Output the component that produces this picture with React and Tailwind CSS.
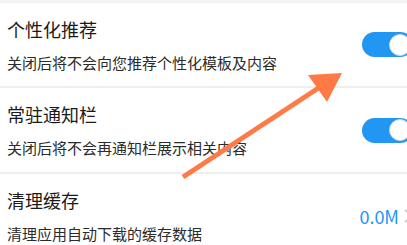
import React from 'react';

const font = { fontFamily: '"Noto Sans CJK SC", "Noto Sans", sans-serif' };

const Toggle = () => (
  <div className="relative h-[25px] w-[51px] shrink-0 rounded-full bg-[#2196f3]">
    <div className="absolute right-[2px] top-[1.5px] h-[22px] w-[22px] rounded-full border border-[#d8d8d8] bg-white" />
  </div>
);

const Chevron = () => (
  <svg width="10" height="16" viewBox="0 0 10 16" className="shrink-0">
    <polyline points="2,2 8,8 2,14" fill="none" stroke="#c4c4c4" strokeWidth="1.5" />
  </svg>
);

const rows = [
  { title: '个性化推荐', desc: '关闭后将不会向您推荐个性化模板及内容', type: 'toggle', h: 'h-[85px]' },
  { title: '常驻通知栏', desc: '关闭后将不会再通知栏展示相关内容', type: 'toggle', h: 'h-[86px]' },
  { title: '清理缓存', desc: '清理应用自动下载的缓存数据', type: 'size', h: 'h-[86px]' },
];

const App = () => {
  return (
    <div className="relative h-[245px] w-[407px] overflow-hidden bg-white" style={font}>
      <div className="w-[420px]">
        <div className="h-[3px] bg-[#f2f2f2]" />
        {rows.map((row) => (
          <div
            key={row.title}
            className={`flex ${row.h} items-center justify-between border-b-2 border-[#efefef] pl-[7px] pr-[7px]`}
          >
            <div className="flex flex-col">
              <div className="text-[18px] leading-[26px] text-[#1a1a1a]">{row.title}</div>
              <div className="mt-[10px] text-[15px] leading-[22px] text-[#2b2b2b]">{row.desc}</div>
            </div>
            {row.type === 'toggle' ? (
              <Toggle />
            ) : (
              <div className="flex items-center gap-[4px]">
                <span className="text-[18px] leading-[24px] text-[#2196f3]">0.0M</span>
                <Chevron />
              </div>
            )}
          </div>
        ))}
      </div>

      {/* annotation arrow */}
      <svg className="pointer-events-none absolute left-0 top-0" width="407" height="245" viewBox="0 0 407 245">
        <line x1="183" y1="177" x2="320" y2="87" stroke="#ff7a45" strokeWidth="5" />
        <polygon points="342,73 308,75 327,102" fill="#ff7a45" />
      </svg>
    </div>
  );
};

export default App;
